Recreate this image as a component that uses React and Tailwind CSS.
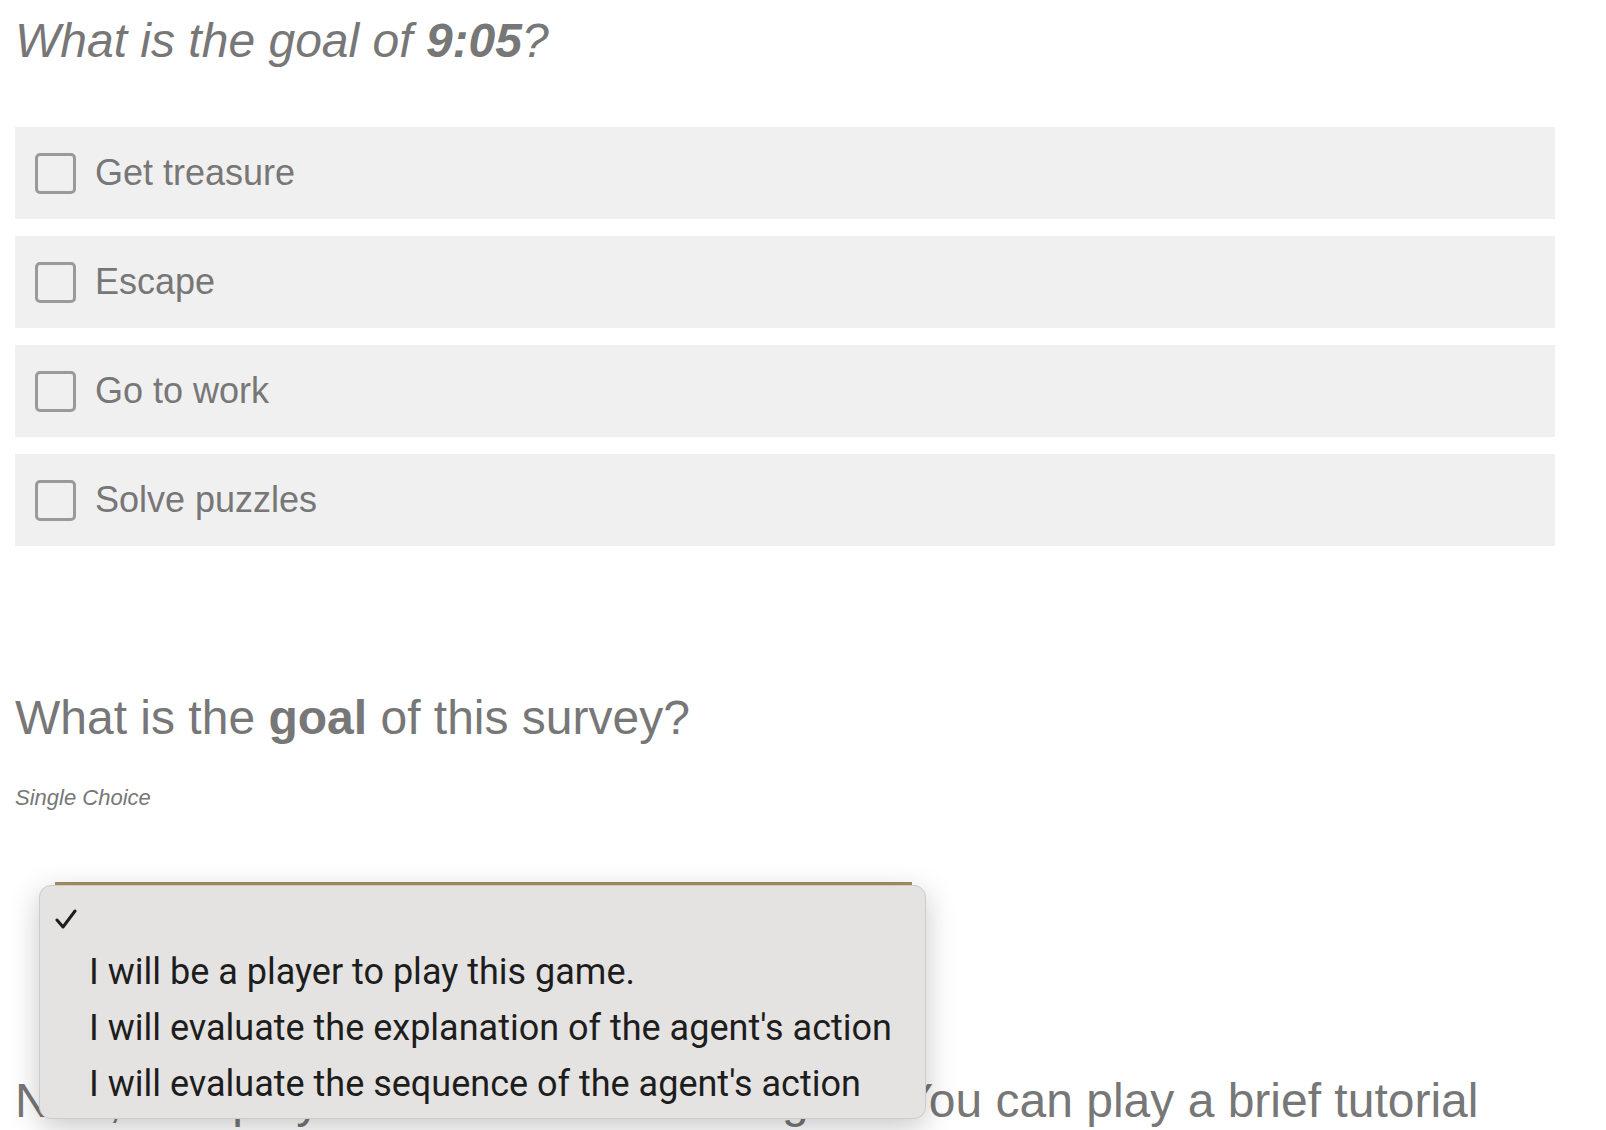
import React from 'react';

const options = ['Get treasure', 'Escape', 'Go to work', 'Solve puzzles'];

const choices = [
    '',
    'I will be a player to play this game.',
    "I will evaluate the explanation of the agent's action",
    "I will evaluate the sequence of the agent's action",
];

export default function App() {
    return (
        <div className="min-h-screen bg-white px-[15px] font-['Liberation_Sans',Arial,sans-serif] text-[#777777]">
            {/* first question */}
            <h1 className="pt-[17px] text-[48px] leading-[48px] font-normal italic">
                What is the goal of <b className="font-bold">9:05</b>?
            </h1>

            <div className="mt-[62px] flex w-[1540px] flex-col gap-[17px]">
                {options.map((opt) => (
                    <label key={opt} className="flex h-[92px] items-center bg-[#f0f0f0] pl-[20px]">
                        <span className="h-[41px] w-[41px] shrink-0 rounded-[5px] border-[3px] border-[#9a9a9a]" />
                        <span className="ml-[19px] text-[36px] leading-none">{opt}</span>
                    </label>
                ))}
            </div>

            {/* second question */}
            <h2 className="mt-[148px] text-[48px] leading-[48px] font-normal">
                What is the <b className="font-bold">goal</b> of this survey?
            </h2>
            <p className="mt-[45px] text-[22px] leading-[22px] italic">Single Choice</p>

            <div className="relative mt-[73px] ml-[40px] h-[60px] w-[857px] border-t-[3px] border-[#a39160] bg-white">
                <div className="absolute top-0 left-[-16px] z-10 w-[887px] rounded-[12px] border border-[#cdcccb] bg-[#e4e3e1] pt-[8px] pb-[6px] font-['Roboto',sans-serif] text-[#1d1d1d] shadow-[0_8px_30px_rgba(0,0,0,0.22)]">
                    {choices.map((c, i) => (
                        <div
                            key={i}
                            className={`flex items-center ${i === 0 ? 'h-[50px]' : 'h-[56px]'} text-[36px] leading-none`}
                        >
                            <span className="flex w-[49px] shrink-0 justify-end pr-[12px]">
                                {i === 0 && (
                                    <svg width="22" height="20" viewBox="0 0 22 20" fill="none">
                                        <path d="M2 11 L8 18 L20 2" stroke="#1d1d1d" strokeWidth="3" strokeLinecap="round" strokeLinejoin="round" />
                                    </svg>
                                )}
                            </span>
                            <span>{c}</span>
                        </div>
                    ))}
                </div>
            </div>

            <p className="mt-[130px] w-[1540px] text-[48px] leading-[1.2]">
                Now, let's play the 9:05 with the AI agent. You can play a brief tutorial first to learn the controls.
            </p>
        </div>
    );
}
